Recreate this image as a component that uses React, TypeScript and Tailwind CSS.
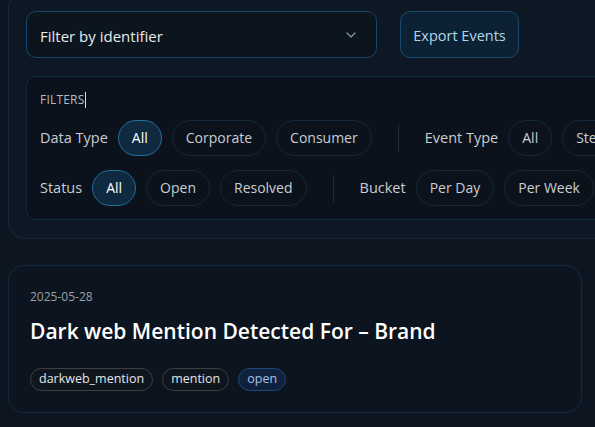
import { ChevronDown } from "lucide-react";

const pillBase =
  "h-9 rounded-full border px-[13px] text-[14px] leading-none flex items-center whitespace-nowrap";
const pillOff = `${pillBase} border-[#14283b] text-[#c9cdd3] bg-transparent`;
const pillOn = `${pillBase} border-[#22709c] bg-[#0e2940] text-white`;

const Pill = ({ label, active }: { label: string; active?: boolean }) => (
  <button type="button" className={active ? pillOn : pillOff}>
    {label}
  </button>
);

const Group = ({
  label,
  options,
  active,
}: {
  label: string;
  options: string[];
  active?: number;
}) => (
  <div className="flex items-center gap-[10px]">
    <span className="whitespace-nowrap text-[14.5px] text-[#c9cdd3]">
      {label}
    </span>
    {options.map((o, i) => (
      <Pill key={o} label={o} active={i === active} />
    ))}
  </div>
);

const Divider = () => <div className="h-[27px] w-px shrink-0 bg-[#232d39]" />;

const Tag = ({ label, tone }: { label: string; tone?: "blue" }) => (
  <span
    className={
      tone === "blue"
        ? "flex h-[23px] items-center rounded-full border border-[#1f4777] bg-[#0f213c] px-[8px] text-[12.5px] text-[#a3c3ea]"
        : "flex h-[23px] items-center rounded-full border border-[#3b4047] bg-[#0f151d] px-[8px] text-[12.5px] text-[#e3e6ea]"
    }
  >
    {label}
  </span>
);

export default function App() {
  return (
    <div
      className="h-[427px] w-[595px] overflow-hidden bg-[#0d1520]"
      style={{ fontFamily: '"Open Sans", "Noto Sans", sans-serif' }}
    >
      <div className="ml-2 mt-[-8px] w-[760px] rounded-2xl border border-[#112a40] bg-[#0e1824] px-[17px] pb-[18px] pt-[18px]">
        <div className="flex items-center gap-[23px]">
          <div className="flex h-[47px] w-[351px] items-center justify-between rounded-[10px] border border-[#15476a] bg-[#0c141e] pl-[13px] pr-[17px] pt-[3px]">
            <span className="text-[15px] text-[#e8eaed]">Filter by identifier</span>
            <ChevronDown className="mb-[3px] h-4 w-4 text-[#7895ad]" strokeWidth={2} />
          </div>
          <button
            type="button"
            className="h-[47px] w-[119px] rounded-[10px] border border-[#19496b] bg-[#0d2134] pt-[3px] text-[14.5px] text-[#aed6ee]"
          >
            Export Events
          </button>
        </div>

        <div className="mt-[18px] rounded-[10px] border border-[#112a40] bg-[#0b121b] px-[13px] pb-[13px] pt-[14px]">
          <div className="flex items-center text-[12px] tracking-[0.2px] text-[#b4bac1]">
            FILTERS
            <span className="ml-px inline-block h-[16px] w-px bg-[#d7dbe0]" />
          </div>
          <div className="mt-[11px] flex items-center gap-[26px]">
            <Group label="Data Type" options={["All", "Corporate", "Consumer"]} active={0} />
            <Divider />
            <Group label="Event Type" options={["All", "Stealer", "Phishing"]} />
          </div>
          <div className="mt-[14px] flex items-center gap-[26px]">
            <Group label="Status" options={["All", "Open", "Resolved"]} active={0} />
            <Divider />
            <Group label="Bucket" options={["Per Day", "Per Week", "Per Month"]} />
          </div>
        </div>
      </div>

      <div className="ml-2 mt-[26px] w-[574px] rounded-2xl border border-[#112a40] bg-[#0c141f] px-[21px] pb-[21px] pt-[22px]">
        <div className="text-[12px] text-[#9aa1a9]">2025-05-28</div>
        <h2 className="mt-[11px] text-[21px] font-semibold leading-[28px] text-white">
          Dark web Mention Detected For – Brand
        </h2>
        <div className="mt-[23px] flex items-center gap-[9px]">
          <Tag label="darkweb_mention" />
          <Tag label="mention" />
          <Tag label="open" tone="blue" />
        </div>
      </div>
    </div>
  );
}
